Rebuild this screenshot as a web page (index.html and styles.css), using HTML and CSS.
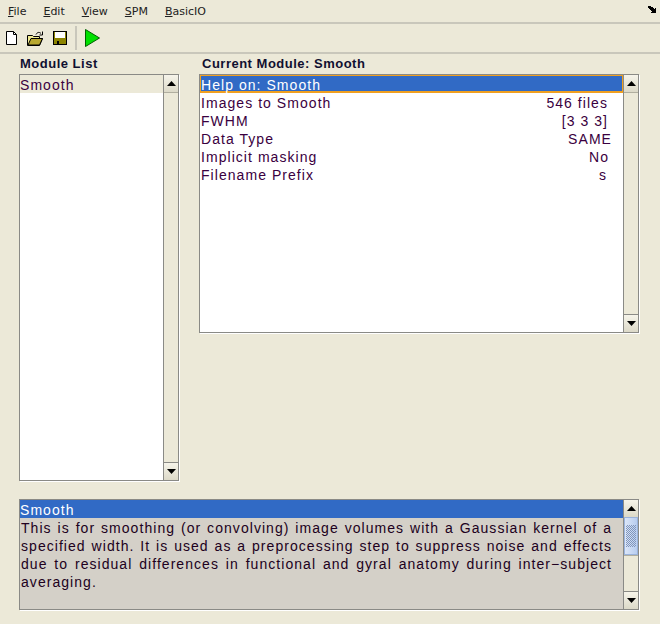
FILE: index.html
```html
<!DOCTYPE html>
<html>
<head>
<meta charset="utf-8">
<title>Batch Editor</title>
<link rel="stylesheet" href="styles.css">
</head>
<body>
<div class="menubar">
  <span class="menu"><u>F</u>ile</span>
  <span class="menu"><u>E</u>dit</span>
  <span class="menu"><u>V</u>iew</span>
  <span class="menu"><u>S</u>PM</span>
  <span class="menu"><u>B</u>asicIO</span>
  <svg class="dock" width="9" height="8" viewBox="0 0 9 8"><path d="M0 0h3v1h2v1h1v1h1v-1h1v5h-5v-1h1v-1h-1v-1h-1v-1h-1v-1h-2z" fill="#000"/></svg>
</div>
<div class="toolbar">
  <svg class="tool new" width="14" height="16" viewBox="0 0 14 16"><path d="M1.500 1.500h7l3 3v10h-10z" fill="#fff" stroke="#000"/><path d="M8.500 1.500v3h3" fill="none" stroke="#000"/></svg>
  <svg class="tool open" width="17" height="15" viewBox="0 0 17 15"><path d="M.5 4.500h5l1 1h6v2h3l-3 7h-12z" fill="#f0ea90" stroke="#000"/><path d="M1 14l3-6.500h11.500l-3 6.500z" fill="#b8a830" stroke="#000"/><path d="M9 3.500c1-2 3-3 5-1M15.500 .5v3.500h-3" fill="none" stroke="#000"/></svg>
  <svg class="tool save" width="16" height="16" viewBox="0 0 16 16"><path d="M1 1h14v14H1z" fill="#000"/><path d="M2 2h1v6h10V2h1v12H2z" fill="#8c8400"/><path d="M3 2h10v6H3z" fill="#fff"/><path d="M4 10h8v4H4z" fill="#8c8400"/><path d="M5 11h2v3H5z" fill="#000"/></svg>
  <span class="sep"></span>
  <svg class="tool run" width="15" height="18" viewBox="0 0 15 18"><path d="M.5 .5v17l14-8.500z" fill="#00e000" stroke="#006000"/></svg>
</div>
<main class="content">
  <section class="modules">
    <h2 class="title title-left">Module List</h2>
    <div class="box tall">
      <div class="list">
        <div class="row selected-grey">Smooth</div>
      </div>
      <div class="scrollbar">
        <div class="arrow"><svg width="9" height="5" viewBox="0 0 9 5"><path d="M4.500 0L9 5H0z"/></svg></div>
        <div class="track"></div>
        <div class="arrow"><svg width="9" height="5" viewBox="0 0 9 5"><path d="M0 0h9L4.500 5z"/></svg></div>
      </div>
    </div>
  </section>
  <section class="current">
    <h2 class="title title-right">Current Module: Smooth</h2>
    <div class="box medium">
      <div class="list">
        <div class="row focused">Help on: Smooth</div>
        <div class="row"><span>Images to Smooth</span><span class="value v1">546 files</span></div>
        <div class="row"><span>FWHM</span><span class="value v1">[3 3 3]</span></div>
        <div class="row"><span>Data Type</span><span class="value v2">SAME</span></div>
        <div class="row"><span>Implicit masking</span><span class="value v3">No</span></div>
        <div class="row"><span>Filename Prefix</span><span class="value v4">s</span></div>
      </div>
      <div class="scrollbar">
        <div class="arrow"><svg width="9" height="5" viewBox="0 0 9 5"><path d="M4.500 0L9 5H0z"/></svg></div>
        <div class="track"></div>
        <div class="arrow"><svg width="9" height="5" viewBox="0 0 9 5"><path d="M0 0h9L4.500 5z"/></svg></div>
      </div>
    </div>
  </section>
  <section class="help box">
    <div class="list helplist">
      <div class="row helphead">Smooth</div>
      <div class="line">This is for smoothing (or convolving) image volumes with a Gaussian kernel of a</div>
      <div class="line">specified width. It is used as a preprocessing step to suppress noise and effects</div>
      <div class="line">due to residual differences in functional and gyral anatomy during inter&#8722;subject</div>
      <div class="line last">averaging.</div>
    </div>
    <div class="scrollbar">
      <div class="arrow"><svg width="9" height="5" viewBox="0 0 9 5"><path d="M4.500 0L9 5H0z"/></svg></div>
      <div class="thumb"><span class="grip"></span></div>
      <div class="track"></div>
      <div class="arrow"><svg width="9" height="5" viewBox="0 0 9 5"><path d="M0 0h9L4.500 5z"/></svg></div>
    </div>
  </section>
</main>
</body>
</html>
```
FILE: styles.css
```css
* { box-sizing: border-box; }
html, body { margin: 0; padding: 0; }
body {
  width: 660px;
  height: 624px;
  overflow: hidden;
  background: #ece9d8;
  font-family: "DejaVu Sans", sans-serif;
  color: #000;
}
.menubar {
  height: 24px;
  display: flex;
  align-items: center;
  padding: 0 0 0 8px;
  border-bottom: 2px solid #c9c7bb;
  font-size: 11px;
  color: #222;
}
.menu { margin-right: 17px; }
.dock { margin-left: auto; margin-right: 3px; margin-top: -2px; }
.toolbar {
  height: 30px;
  display: flex;
  align-items: center;
  padding-left: 5px;
  border-bottom: 2px solid #c9c7bb;
}
.tool { flex: none; }
.new { margin-right: 8px; }
.open { margin-right: 8px; }
.save { margin-right: 7px; }
.sep { width: 2px; height: 24px; background: #c9c7bb; margin-right: 8px; }
.content {
  display: grid;
  grid-template-columns: 160px 440px;
  grid-template-rows: 279px 111px;
  column-gap: 20px;
  row-gap: 166px;
  padding: 0 21px 0 19px;
  align-items: start;
}
.title {
  margin: 0;
  height: 20px;
  padding-top: 1px;
  font-family: "Liberation Sans", sans-serif;
  font-size: 13px;
  letter-spacing: 0.500px;
  line-height: 17px;
  font-weight: bold;
  color: #101030;
}
.title-left { padding-left: 1px; }
.title-right { padding-left: 3px; }
.box {
  display: flex;
  border: 1px solid #8a8a86;
  box-shadow: 1px 1px 0 #fff;
  background: #fff;
  font-family: "Liberation Sans", sans-serif;
  font-size: 14px;
  letter-spacing: 1.050px;
  color: #3a0040;
}
.tall { height: 407px; }
.medium { height: 259px; }
.modules { grid-column: 1; grid-row: 1 / span 2; }
.current { grid-column: 2; grid-row: 1; }
.help {
  grid-column: 1 / span 2;
  grid-row: 2;
  height: 111px;
  background: #d4d0c8;
}
.list { flex: 1; min-width: 0; }
.row {
  height: 18px;
  line-height: 20px;
  padding: 0 0 0 1px;
  display: flex;
  justify-content: space-between;
}
.selected-grey { background: #ece9d8; padding-left: 0; }
.focused {
  background: #316ac5;
  color: #fff;
  border: 1px solid #f0a020;
  border-bottom-width: 2px;
  padding-left: 0;
  line-height: 18px;
}
.value { white-space: pre; }
.v1 { margin-right: 15px; }
.v2 { margin-right: 11px; }
.v3 { margin-right: 14px; }
.v4 { margin-right: 16px; }
.helphead { background: #316ac5; color: #fff; padding-left: 0; }
.helplist { overflow: hidden; }
.line {
  height: 18px;
  line-height: 20px;
  padding: 0 11px 0 1px;
  text-align: justify;
  text-align-last: justify;
  white-space: normal;
  color: #200020;
}
.last { text-align-last: left; }
.scrollbar {
  width: 15px;
  flex: none;
  display: flex;
  flex-direction: column;
  background: #ece9d8;
  border-left: 1px solid #8a8a86;
}
.arrow {
  height: 17px;
  flex: none;
  display: flex;
  align-items: center;
  justify-content: center;
  background: linear-gradient(#f6f4ea, #dcd9c8);
}
.track { flex: 1; border-top: 1px solid #b0ae9f; border-bottom: 1px solid #8a8a86; }
.thumb {
  height: 38px;
  flex: none;
  display: flex;
  align-items: center;
  justify-content: center;
  background: linear-gradient(90deg, #dbe6f8, #b8cdf0);
  border: 1px solid #9ab3dc;
}
.grip {
  width: 10px;
  height: 22px;
  background-image: conic-gradient(#8296bb 25%, transparent 0 50%, #8296bb 0 75%, transparent 0);
  background-size: 2px 2px;
}
```
